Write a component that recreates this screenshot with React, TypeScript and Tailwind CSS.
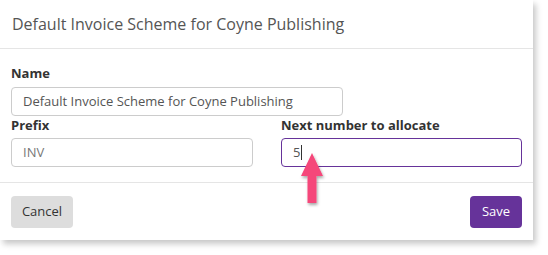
import React from "react";

const font = { fontFamily: '"Open Sans", "Noto Sans", sans-serif' };

export default function App() {
  return (
    <div className="relative w-[548px] h-[255px] bg-white" style={font}>
      {/* Dialog */}
      <div className="w-[533px] h-[240px] bg-white shadow-[3px_4px_6px_rgba(0,0,0,0.22)] flex flex-col">
        <div className="h-[49px] border-b border-[#e5e5e5] flex items-center pl-[12px] text-[16px] text-[#555]">
          Default Invoice Scheme for Coyne Publishing
        </div>

        <div className="px-[11px] pt-[15px] pb-[15px] border-b border-[#e5e5e5]">
          <label className="block text-[13px] leading-[18px] font-bold text-[#333]">Name</label>
          <div className="mt-[5px] w-[332px] h-[29px] border border-[#ccc] rounded-[4px] flex items-center pl-[11px] text-[13px] text-[#555]">
            Default Invoice Scheme for Coyne Publishing
          </div>

          <div className="grid grid-cols-[242px_241px] gap-x-[28px]">
            <div>
              <label className="block text-[13px] leading-[18px] font-bold text-[#333]">Prefix</label>
              <div className="mt-[4px] h-[29px] border border-[#ccc] rounded-[4px] flex items-center pl-[11px] text-[13px] text-[#777]">
                INV
              </div>
            </div>
            <div>
              <label className="block text-[13px] leading-[18px] font-bold text-[#333]">Next number to allocate</label>
              <div className="mt-[4px] h-[29px] border border-[#66339a] rounded-[4px] flex items-center pl-[11px] text-[13px] text-[#555]">
                5<span className="w-px h-[15px] bg-[#333] ml-[1px]" />
              </div>
            </div>
          </div>
        </div>

        <div className="flex-1 flex items-center justify-between px-[11px]">
          <button className="w-[62px] h-[32px] rounded-[4px] bg-[#ddd] text-[13px] text-[#333]">Cancel</button>
          <button className="w-[52px] h-[32px] rounded-[4px] bg-[#66339a] text-[13px] text-white">Save</button>
        </div>
      </div>

      {/* Annotation arrow */}
      <svg className="absolute left-[296px] top-[150px]" width="34" height="60" viewBox="0 0 34 60">
        <defs>
          <filter id="sh" x="-30%" y="-30%" width="160%" height="160%">
            <feDropShadow dx="1" dy="2" stdDeviation="1.5" floodColor="#000" floodOpacity="0.35" />
          </filter>
        </defs>
        <path d="M16 3 L27 26 L20.5 26 L20.5 53 L11.5 53 L11.5 26 L5 26 Z" fill="#f5477a" filter="url(#sh)" />
      </svg>
    </div>
  );
}
